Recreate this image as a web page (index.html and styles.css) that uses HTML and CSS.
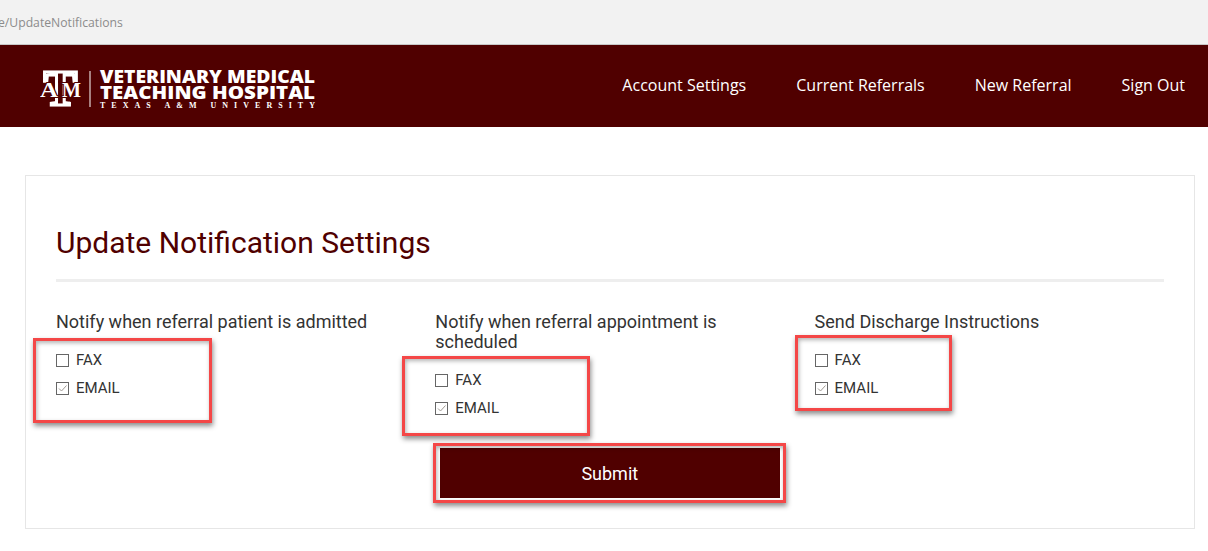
FILE: index.html
```html
<!DOCTYPE html>
<html lang="en">
<head>
<meta charset="utf-8">
<title>Update Notification Settings</title>
<link rel="stylesheet" href="styles.css">
</head>
<body>
<div class="addressbar"><span class="url">e/UpdateNotifications</span></div>
<header class="site-header">
  <a class="logo" href="#" aria-label="Veterinary Medical Teaching Hospital">
    <svg width="280" height="48" viewBox="0 0 280 48">
      <text class="logo-t" x="20.500" y="43" text-anchor="middle">T</text>
      <text class="logo-am" x="0" y="35" textLength="18" lengthAdjust="spacingAndGlyphs">A</text>
      <text class="logo-am" x="22" y="35" textLength="19" lengthAdjust="spacingAndGlyphs">M</text>
      <circle class="logo-fill" cx="29.500" cy="41" r="1.300"/>
      <rect class="logo-fill" x="49.500" y="9" width="1" height="36"/>
      <text class="logo-main" x="60" y="21" textLength="215" lengthAdjust="spacingAndGlyphs">VETERINARY MEDICAL</text>
      <text class="logo-main" x="60" y="37" textLength="215" lengthAdjust="spacingAndGlyphs">TEACHING HOSPITAL</text>
      <text class="logo-sub" x="60" y="46" textLength="215" lengthAdjust="spacing">TEXAS A&amp;M UNIVERSITY</text>
    </svg>
  </a>
  <nav class="nav">
    <a href="#">Account Settings</a>
    <a href="#">Current Referrals</a>
    <a href="#">New Referral</a>
    <a href="#">Sign Out</a>
  </nav>
</header>
<main class="card">
  <h1 class="title">Update Notification Settings</h1>
  <div class="rule"></div>
  <div class="columns">
    <section class="col">
      <h2 class="col-title">Notify when referral patient is admitted</h2>
      <div class="option"><span class="box"></span>FAX</div>
      <div class="option"><span class="box"><svg viewBox="0 0 11 11" width="11" height="11"><path d="M2 5.500 4.500 8 9.500 2.500"/></svg></span>EMAIL</div>
      <span class="mark mark-a"></span>
    </section>
    <section class="col">
      <h2 class="col-title">Notify when referral appointment is scheduled</h2>
      <div class="option"><span class="box"></span>FAX</div>
      <div class="option"><span class="box"><svg viewBox="0 0 11 11" width="11" height="11"><path d="M2 5.500 4.500 8 9.500 2.500"/></svg></span>EMAIL</div>
      <span class="mark mark-b"></span>
      <div class="submit-wrap">
        <button class="submit" type="button">Submit</button>
        <span class="mark mark-c"></span>
      </div>
    </section>
    <section class="col">
      <h2 class="col-title">Send Discharge Instructions</h2>
      <div class="option"><span class="box"></span>FAX</div>
      <div class="option"><span class="box"><svg viewBox="0 0 11 11" width="11" height="11"><path d="M2 5.500 4.500 8 9.500 2.500"/></svg></span>EMAIL</div>
      <span class="mark mark-d"></span>
    </section>
  </div>
</main>
</body>
</html>
```
FILE: styles.css
```css
* { box-sizing: border-box; }
html, body { margin: 0; height: 551px; overflow: hidden; background: #fff; }
body { font-family: Roboto, "Liberation Sans", sans-serif; color: #333; }

.addressbar {
  height: 45px;
  background: #f2f2f2;
  border-bottom: 1px solid #c8c8c8;
  display: flex;
  align-items: center;
  overflow: hidden;
}
.url {
  margin-left: -2px;
  font: 12.200px "Open Sans", sans-serif;
  color: #8c8c8c;
}

.site-header {
  height: 82px;
  background: #500000;
  display: flex;
  align-items: center;
  justify-content: space-between;
  padding: 0 23px 0 40px;
}
.logo { display: block; height: 48px; }
.logo svg { display: block; }
.logo-fill { fill: #fff; }
.logo-t {
  font: 700 50px "Liberation Serif", serif;
  fill: #500000;
  stroke: #fff;
  stroke-width: 3px;
}
.logo-am {
  font: 700 20px "Liberation Serif", serif;
  fill: #fff;
  stroke: #500000;
  stroke-width: 2px;
  paint-order: stroke;
}
.logo-main { font: 800 18px "Open Sans", sans-serif; fill: #fff; }
.logo-sub { font: 700 8px "Liberation Serif", serif; fill: #fff; }

.nav { display: flex; gap: 50px; margin-top: -2px; }
.nav a { color: #fff; text-decoration: none; font: 16px "Open Sans", sans-serif; }

.card {
  margin: 48px 13px 0 25px;
  height: 354px;
  border: 1px solid #e6e6e6;
  padding: 30px 30px 0;
}
.title {
  margin: 0;
  font-size: 30px;
  font-weight: 400;
  line-height: 36px;
  color: #500000;
  padding-top: 19px;
  height: 55px;
}
.rule { height: 3px; background: #eee; margin-top: 18px; }

.columns {
  display: grid;
  grid-template-columns: repeat(3, 379.300px);
  padding-top: 30px;
}
.col { position: relative; padding-right: 40px; }
.col-title {
  margin: 0 0 14px;
  font-size: 18px;
  font-weight: 400;
  line-height: 20px;
  color: #333;
}
.option {
  display: flex;
  align-items: center;
  gap: 7px;
  height: 28px;
  font-size: 15px;
  color: #333;
}
.box {
  width: 13px;
  height: 13px;
  border: 1px solid #666;
  background: #fff;
  display: flex;
}
.box svg { fill: none; stroke: #a09a94; stroke-width: 1; }

.submit-wrap { position: relative; margin: 26px -1px 0 4.500px; }
.submit {
  display: block;
  width: 340px;
  height: 50px;
  border: 0;
  background: #500000;
  color: #fff;
  font: 18px Roboto, sans-serif;
}

.mark {
  position: absolute;
  border: 3px solid #f44747;
  box-shadow: 1px 3px 5px rgba(0, 0, 0, 0.45), inset 1px 2px 4px rgba(0, 0, 0, 0.3);
  pointer-events: none;
}
.mark-a { left: -23px; top: 26px; width: 179px; height: 85px; }
.mark-b { left: -33px; top: 44px; width: 188px; height: 80px; }
.mark-c { left: -7px; top: -5px; width: 353px; height: 60px; }
.mark-d { left: -20px; top: 23px; width: 157px; height: 76px; }
```
